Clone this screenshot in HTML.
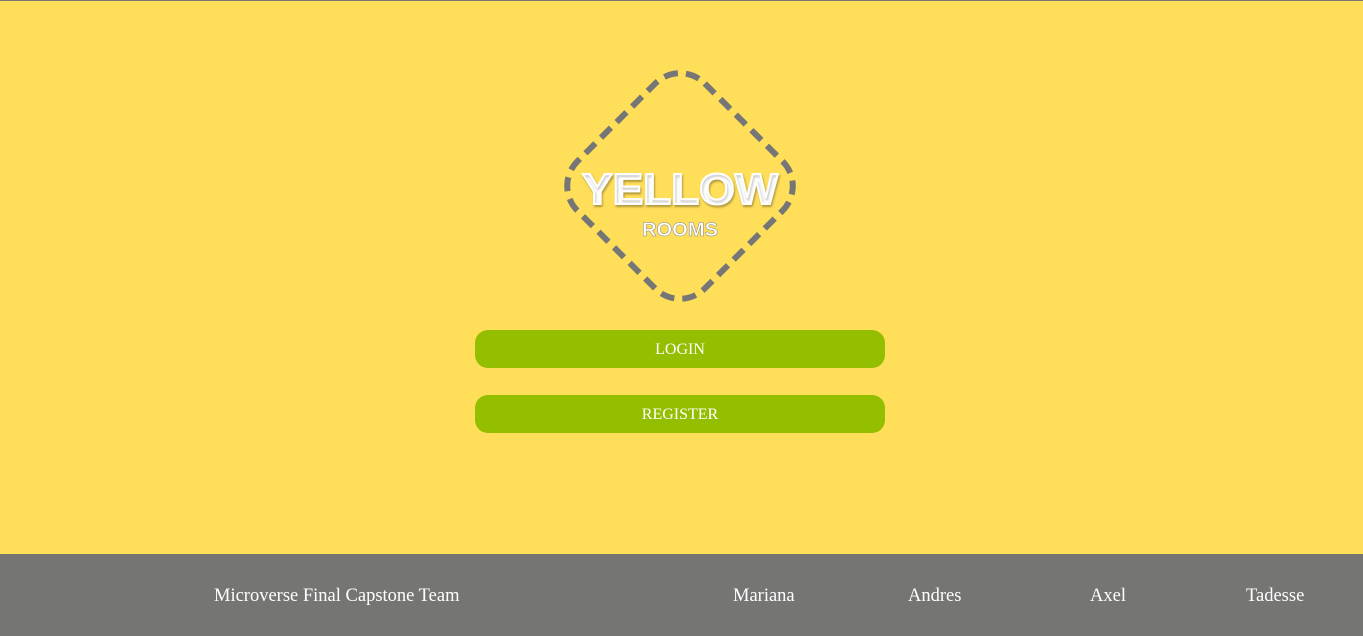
<!DOCTYPE html>
<html><head><style>
body{margin:0;width:1363px;height:635px;background:#ffde59;position:relative;overflow:hidden;font-family:"Liberation Serif",serif;border-top:1px solid #777;box-sizing:border-box}
.btn{position:absolute;left:475px;width:410px;height:38px;background:#93bf00;border-radius:13px;color:#fff;font-size:16px;text-align:center;line-height:40px}
footer{position:absolute;left:0;top:553px;width:1363px;height:82px;background:#757573;color:#fff;font-size:18.5px}
footer span{position:absolute;top:32px;white-space:nowrap}
</style></head><body>
<svg style="position:absolute;left:555px;top:60px" width="250" height="250">
<rect x="35" y="35" width="180" height="180" rx="35" transform="rotate(45 125 125)" fill="none" stroke="#767676" stroke-width="6" stroke-dasharray="14 8"/>
<text x="125" y="143" text-anchor="middle" font-family="Liberation Sans,sans-serif" font-weight="bold" font-size="44" fill="#fff" stroke="#fff" stroke-width="2" style="text-shadow:1px 2px 2px rgba(0,0,0,.25)" textLength="196" lengthAdjust="spacingAndGlyphs">YELLOW</text>
<text x="125" y="175" text-anchor="middle" font-family="Liberation Sans,sans-serif" font-weight="bold" font-size="19" fill="#fff" stroke="#888" stroke-width=".5" textLength="76" lengthAdjust="spacingAndGlyphs">ROOMS</text>
</svg>
<div class="btn" style="top:329px">LOGIN</div>
<div class="btn" style="top:394px">REGISTER</div>
<footer>
<span style="left:214px">Microverse Final Capstone Team</span>
<span style="left:733px">Mariana</span>
<span style="left:908px">Andres</span>
<span style="left:1090px">Axel</span>
<span style="left:1246px">Tadesse</span>
</footer>
</body></html>
